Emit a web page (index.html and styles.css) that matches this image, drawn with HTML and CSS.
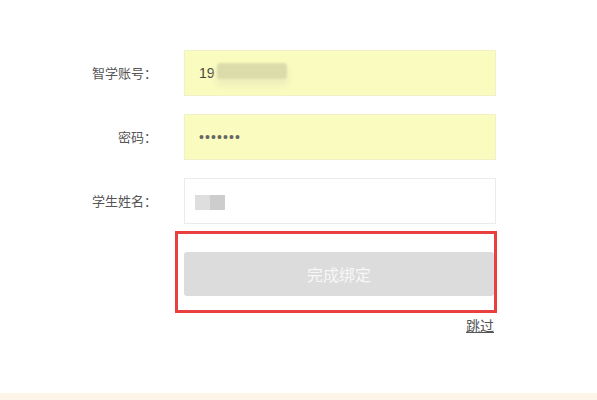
FILE: index.html
```html
<!DOCTYPE html>
<html lang="zh">
<head>
<meta charset="utf-8">
<link rel="stylesheet" href="styles.css">
</head>
<body>
<div class="page">
  <div class="form">
    <div class="label">智学账号：</div>
    <div class="field filled"><span class="val">19</span><span class="blur-a"></span></div>
    <div class="label">密码：</div>
    <div class="field filled"><span class="dots">•••••••</span></div>
    <div class="label">学生姓名：</div>
    <div class="field"><span class="blk light"></span><span class="blk dark"></span></div>
  </div>
  <div class="actions">
    <div class="btn-wrap">
      <div class="btn">完成绑定</div>
      <div class="frame"></div>
    </div>
    <div class="skip"><a class="skip-link">跳过</a></div>
  </div>
  <div class="band"></div>
</div>
</body>
</html>
```

FILE: styles.css
```css
html, body {
  margin: 0;
  padding: 0;
  background: #ffffff;
}
body {
  font-family: "Noto Sans CJK SC", "Liberation Sans", sans-serif;
}
.page {
  height: 400px;
  display: flex;
  flex-direction: column;
}
.form {
  margin-top: 50px;
  display: grid;
  grid-template-columns: 184px 312px;
  grid-auto-rows: 46px;
  row-gap: 18px;
}
.label {
  text-align: right;
  padding-right: 27px;
  font-size: 13px;
  line-height: 46px;
  color: #555555;
}
.field {
  box-sizing: border-box;
  border: 1px solid #ebebeb;
  background: #ffffff;
  display: flex;
  align-items: center;
  padding-left: 10px;
}
.field.filled {
  background: #fafcbf;
  border-color: #eff2c6;
  padding-left: 14px;
}
.val {
  font-family: "Liberation Sans", sans-serif;
  font-size: 14px;
  color: #444444;
}
.blur-a {
  display: inline-block;
  width: 70px;
  height: 16px;
  margin-left: 2px;
  margin-top: -4px;
  background: #dcdcab;
  border-radius: 3px;
  filter: blur(0.8px);
  box-shadow: 0 6px 6px 2px #eef0bc;
}
.dots {
  font-family: "Liberation Sans", sans-serif;
  font-size: 14px;
  letter-spacing: 1.1px;
  color: #666666;
}
.blk {
  display: inline-block;
  width: 15px;
  height: 15px;
  margin-top: 2px;
}
.blk.light { background: #dedede; }
.blk.dark { background: #cdcdcd; }
.actions {
  margin-left: 184px;
  width: 310px;
}
.btn-wrap {
  position: relative;
  margin-top: 28px;
}
.btn {
  height: 44px;
  line-height: 44px;
  background: #dcdcdc;
  border-radius: 3px;
  text-align: center;
  color: #f7f7f7;
  font-size: 16px;
}
.frame {
  position: absolute;
  top: -21px;
  left: -9px;
  right: -3px;
  bottom: -17px;
  border: 3px solid #e8403f;
}
.skip {
  margin-top: 21px;
  text-align: right;
  font-size: 14px;
  line-height: 17px;
}
.skip-link {
  color: #555555;
  text-decoration: underline;
}
.band {
  margin-top: auto;
  height: 7px;
  background: #fdf5e8;
}
```
